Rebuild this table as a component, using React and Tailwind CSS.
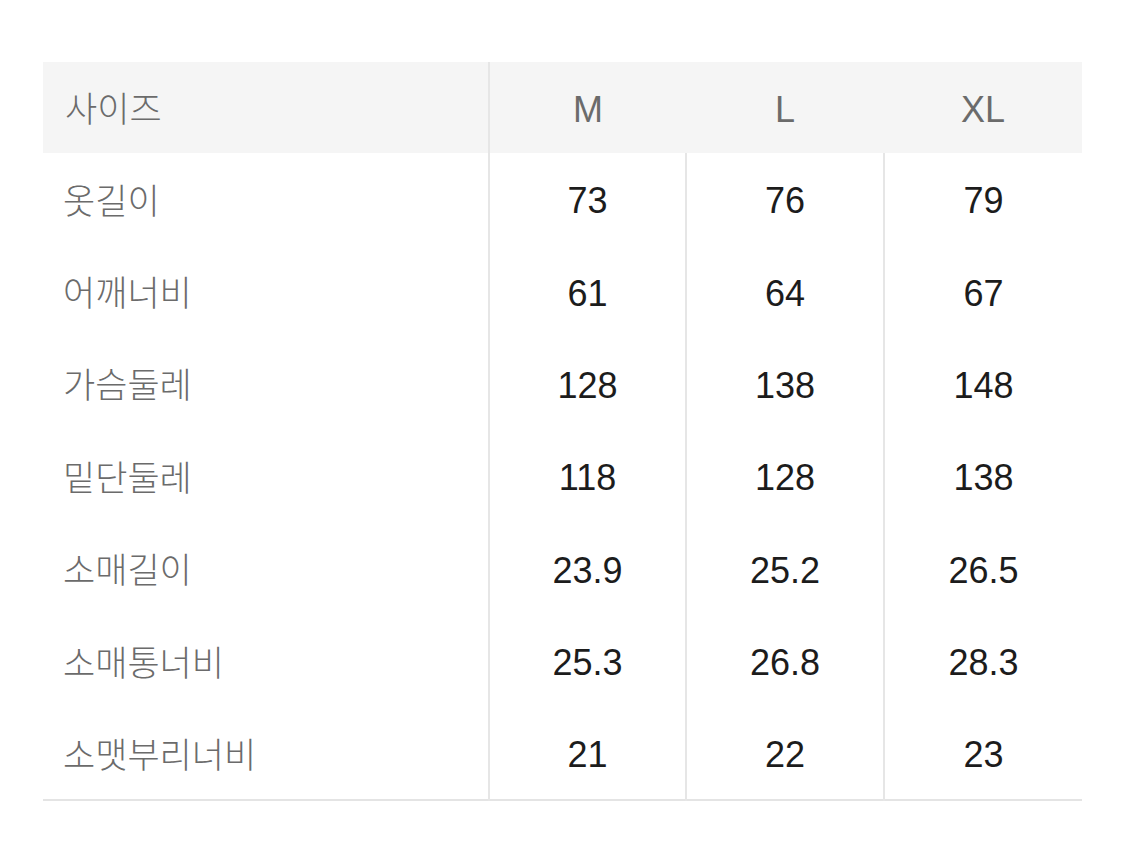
const sizes = ['M', 'L', 'XL'];

const rows = [
    { label: '옷길이', values: ['73', '76', '79'] },
    { label: '어깨너비', values: ['61', '64', '67'] },
    { label: '가슴둘레', values: ['128', '138', '148'] },
    { label: '밑단둘레', values: ['118', '128', '138'] },
    { label: '소매길이', values: ['23.9', '25.2', '26.5'] },
    { label: '소매통너비', values: ['25.3', '26.8', '28.3'] },
    { label: '소맷부리너비', values: ['21', '22', '23'] },
];

export default function App() {
    return (
        <div
            className="min-h-[842px] w-full bg-white pt-[62px] pl-[43px]"
            style={{ fontFamily: '"Liberation Sans", "Noto Sans CJK KR", sans-serif' }}
        >
            <table className="w-[1039px] table-fixed border-collapse text-[36px] leading-none">
                <colgroup>
                    <col className="w-[446px]" />
                    <col className="w-[197px]" />
                    <col className="w-[198px]" />
                    <col className="w-[198px]" />
                </colgroup>
                <thead>
                    <tr className="h-[91px] bg-[#f5f5f5]">
                        <th className="border-r-2 border-[#e6e6e6] pl-[22px] pt-1 text-left text-[35px] font-light text-[#6b6b6b]">사이즈</th>
                        {sizes.map((s) => (
                            <th key={s} className="pt-1 text-center font-normal text-[#6b6b6b]">{s}</th>
                        ))}
                    </tr>
                </thead>
                <tbody>
                    {rows.map((row, i) => (
                        <tr key={row.label} className={i === rows.length - 1 ? 'h-[92.4px] border-b-2 border-[#e4e4e4]' : 'h-[92.4px]'}>
                            <td className="border-r-2 border-[#e6e6e6] pl-[20px] pt-1 text-left text-[35px] font-light text-[#6b6b6b]">{row.label}</td>
                            {row.values.map((v, j) => (
                                <td
                                    key={j}
                                    className={j < 2 ? 'border-r-2 border-[#e6e6e6] pt-1 text-center text-[#1c1c1c]' : 'pt-1 text-center text-[#1c1c1c]'}
                                >
                                    {v}
                                </td>
                            ))}
                        </tr>
                    ))}
                </tbody>
            </table>
        </div>
    );
}
